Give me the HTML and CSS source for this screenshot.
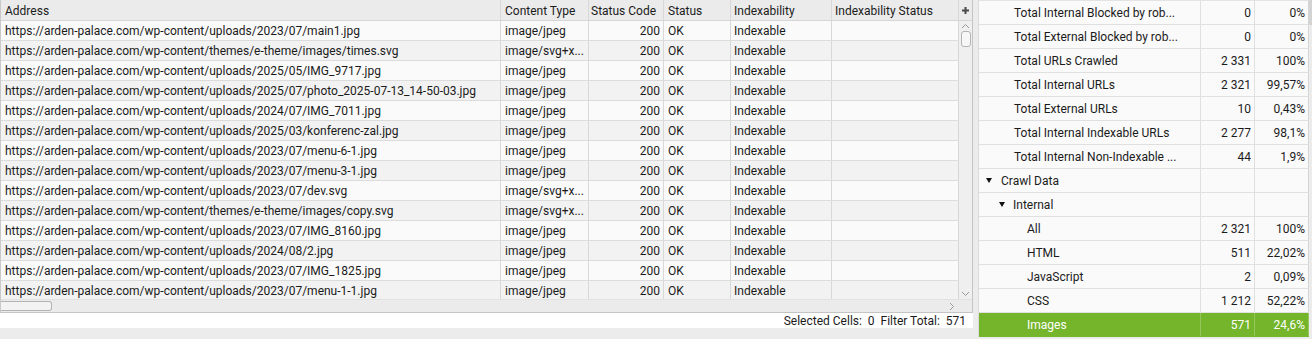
FILE: index.html
```html
<!DOCTYPE html>
<html lang="en">
<head>
<meta charset="utf-8">
<title>Crawl</title>
<link rel="stylesheet" href="styles.css">
</head>
<body>
<div class="app">
  <section class="left">
    <div class="grid">
      <div class="thead">
        <div class="th c-addr">Address</div>
        <div class="th c-ct">Content Type</div>
        <div class="th c-sc">Status Code</div>
        <div class="th c-st">Status</div>
        <div class="th c-ix">Indexability</div>
        <div class="th c-ixs">Indexability Status</div>
        <div class="th c-plus"><svg width="9" height="9" viewBox="0 0 9 9"><path d="M4.5 1v7M1 4.5h7" stroke="#4a4a4a" stroke-width="2"/></svg></div>
      </div>
      <div class="tbody">
        <div class="rows">
          <div class="tr"><div class="td c-addr">https://arden-palace.com/wp-content/uploads/2023/07/main1.jpg</div><div class="td c-ct">image/jpeg</div><div class="td c-sc">200</div><div class="td c-st">OK</div><div class="td c-ix">Indexable</div><div class="td c-ixs"></div></div>
          <div class="tr"><div class="td c-addr">https://arden-palace.com/wp-content/themes/e-theme/images/times.svg</div><div class="td c-ct">image/svg+x...</div><div class="td c-sc">200</div><div class="td c-st">OK</div><div class="td c-ix">Indexable</div><div class="td c-ixs"></div></div>
          <div class="tr"><div class="td c-addr">https://arden-palace.com/wp-content/uploads/2025/05/IMG_9717.jpg</div><div class="td c-ct">image/jpeg</div><div class="td c-sc">200</div><div class="td c-st">OK</div><div class="td c-ix">Indexable</div><div class="td c-ixs"></div></div>
          <div class="tr"><div class="td c-addr">https://arden-palace.com/wp-content/uploads/2025/07/photo_2025-07-13_14-50-03.jpg</div><div class="td c-ct">image/jpeg</div><div class="td c-sc">200</div><div class="td c-st">OK</div><div class="td c-ix">Indexable</div><div class="td c-ixs"></div></div>
          <div class="tr"><div class="td c-addr">https://arden-palace.com/wp-content/uploads/2024/07/IMG_7011.jpg</div><div class="td c-ct">image/jpeg</div><div class="td c-sc">200</div><div class="td c-st">OK</div><div class="td c-ix">Indexable</div><div class="td c-ixs"></div></div>
          <div class="tr"><div class="td c-addr">https://arden-palace.com/wp-content/uploads/2025/03/konferenc-zal.jpg</div><div class="td c-ct">image/jpeg</div><div class="td c-sc">200</div><div class="td c-st">OK</div><div class="td c-ix">Indexable</div><div class="td c-ixs"></div></div>
          <div class="tr"><div class="td c-addr">https://arden-palace.com/wp-content/uploads/2023/07/menu-6-1.jpg</div><div class="td c-ct">image/jpeg</div><div class="td c-sc">200</div><div class="td c-st">OK</div><div class="td c-ix">Indexable</div><div class="td c-ixs"></div></div>
          <div class="tr"><div class="td c-addr">https://arden-palace.com/wp-content/uploads/2023/07/menu-3-1.jpg</div><div class="td c-ct">image/jpeg</div><div class="td c-sc">200</div><div class="td c-st">OK</div><div class="td c-ix">Indexable</div><div class="td c-ixs"></div></div>
          <div class="tr"><div class="td c-addr">https://arden-palace.com/wp-content/uploads/2023/07/dev.svg</div><div class="td c-ct">image/svg+x...</div><div class="td c-sc">200</div><div class="td c-st">OK</div><div class="td c-ix">Indexable</div><div class="td c-ixs"></div></div>
          <div class="tr"><div class="td c-addr">https://arden-palace.com/wp-content/themes/e-theme/images/copy.svg</div><div class="td c-ct">image/svg+x...</div><div class="td c-sc">200</div><div class="td c-st">OK</div><div class="td c-ix">Indexable</div><div class="td c-ixs"></div></div>
          <div class="tr"><div class="td c-addr">https://arden-palace.com/wp-content/uploads/2023/07/IMG_8160.jpg</div><div class="td c-ct">image/jpeg</div><div class="td c-sc">200</div><div class="td c-st">OK</div><div class="td c-ix">Indexable</div><div class="td c-ixs"></div></div>
          <div class="tr"><div class="td c-addr">https://arden-palace.com/wp-content/uploads/2024/08/2.jpg</div><div class="td c-ct">image/jpeg</div><div class="td c-sc">200</div><div class="td c-st">OK</div><div class="td c-ix">Indexable</div><div class="td c-ixs"></div></div>
          <div class="tr"><div class="td c-addr">https://arden-palace.com/wp-content/uploads/2023/07/IMG_1825.jpg</div><div class="td c-ct">image/jpeg</div><div class="td c-sc">200</div><div class="td c-st">OK</div><div class="td c-ix">Indexable</div><div class="td c-ixs"></div></div>
          <div class="tr"><div class="td c-addr">https://arden-palace.com/wp-content/uploads/2023/07/menu-1-1.jpg</div><div class="td c-ct">image/jpeg</div><div class="td c-sc">200</div><div class="td c-st">OK</div><div class="td c-ix">Indexable</div><div class="td c-ixs"></div></div>
        </div>
        <div class="vscroll">
          <svg class="chev" width="9" height="6" viewBox="0 0 9 6"><path d="M1 5l3.5-3.5L8 5" fill="none" stroke="#9a9a9a" stroke-width="1"/></svg>
          <div class="vthumb"></div>
          <div class="vspacer"></div>
          <svg class="chev" width="9" height="6" viewBox="0 0 9 6"><path d="M1 1l3.5 3.5L8 1" fill="none" stroke="#9a9a9a" stroke-width="1"/></svg>
        </div>
      </div>
      <div class="hscroll">
        <div class="hthumb"></div>
        <svg class="hchev" width="6" height="9" viewBox="0 0 6 9"><path d="M1 1l3.5 3.5L1 8" fill="none" stroke="#9a9a9a" stroke-width="1"/></svg>
        <div class="hcorner"></div>
      </div>
    </div>
    <div class="status">Selected Cells:&nbsp; 0&nbsp; Filter Total:&nbsp; 571</div>
  </section>

  <section class="right">
    <div class="tree">
      <div class="trow"><div class="lbl l1">Total Internal Blocked by rob...</div><div class="num">0</div><div class="pct">0%</div></div>
      <div class="trow"><div class="lbl l1">Total External Blocked by rob...</div><div class="num">0</div><div class="pct">0%</div></div>
      <div class="trow"><div class="lbl l1">Total URLs Crawled</div><div class="num">2 331</div><div class="pct">100%</div></div>
      <div class="trow"><div class="lbl l1">Total Internal URLs</div><div class="num">2 321</div><div class="pct">99,57%</div></div>
      <div class="trow"><div class="lbl l1">Total External URLs</div><div class="num">10</div><div class="pct">0,43%</div></div>
      <div class="trow"><div class="lbl l1">Total Internal Indexable URLs</div><div class="num">2 277</div><div class="pct">98,1%</div></div>
      <div class="trow"><div class="lbl l1">Total Internal Non-Indexable ...</div><div class="num">44</div><div class="pct">1,9%</div></div>
      <div class="trow"><div class="lbl g0"><span class="tri"></span>Crawl Data</div><div class="num"></div><div class="pct"></div></div>
      <div class="trow"><div class="lbl g1"><span class="tri"></span>Internal</div><div class="num"></div><div class="pct"></div></div>
      <div class="trow"><div class="lbl l2">All</div><div class="num">2 321</div><div class="pct">100%</div></div>
      <div class="trow"><div class="lbl l2">HTML</div><div class="num">511</div><div class="pct">22,02%</div></div>
      <div class="trow"><div class="lbl l2">JavaScript</div><div class="num">2</div><div class="pct">0,09%</div></div>
      <div class="trow"><div class="lbl l2">CSS</div><div class="num">1 212</div><div class="pct">52,22%</div></div>
      <div class="trow sel"><div class="lbl l2">Images</div><div class="num">571</div><div class="pct">24,6%</div></div>
    </div>
    <div class="rscroll"><div class="rthumb"></div></div>
  </section>
</div>
</body>
</html>
```

FILE: styles.css
```css
* { box-sizing: border-box; }
html, body { margin: 0; padding: 0; }
body {
  background: #ececec;
  font-family: Roboto, "Liberation Sans", Arial, sans-serif;
  font-size: 12px;
  color: #1b1b1b;
  width: 1312px;
  height: 339px;
  overflow: hidden;
}
.app {
  display: flex;
  align-items: flex-start;
  gap: 5px;
  height: 339px;
}

/* ---------- left grid ---------- */
.left {
  width: 973px;
  flex: none;
  display: flex;
  flex-direction: column;
}
.grid {
  height: 313px;
  border-left: 1px solid #c9c9c9;
  border-right: 1px solid #c4c4c4;
  border-bottom: 1px solid #c4c4c4;
  display: flex;
  flex-direction: column;
  background: #f9f9f9;
}
.thead {
  height: 21px;
  display: flex;
  background: #ebebeb;
  border-bottom: 1px solid #d6d6d6;
}
.th, .td {
  border-right: 1px solid #d8d8d8;
  padding: 1px 4px 0;
  white-space: nowrap;
  overflow: hidden;
  display: flex;
  align-items: center;
  flex: none;
}
.c-addr { width: 500px; }
.c-ct { width: 88px; }
.c-sc { width: 75px; justify-content: flex-end; padding-right: 3px; }
.th.c-sc { justify-content: flex-start; padding-left: 2px; }
.c-st { width: 67px; }
.c-ix { width: 101px; padding-left: 3px; }
.c-ixs { width: 127px; padding-left: 3px; }
.c-plus { width: 13px; border-right: none; justify-content: center; padding: 0; }

.tbody {
  height: 278px;
  display: flex;
  overflow: hidden;
}
.rows {
  width: 958px;
  flex: none;
  overflow: hidden;
}
.tr {
  height: 20px;
  display: flex;
  border-bottom: 1px solid #dcdcdc;
  background: #fafafa;
}
.tr:nth-child(even) { background: #f2f2f2; }

.vscroll {
  width: 13px;
  flex: none;
  background: #efefef;
  display: flex;
  flex-direction: column;
  align-items: center;
  padding-top: 2px;
  padding-bottom: 2px;
}
.chev { display: block; flex: none; }
.vthumb {
  width: 10px;
  height: 16px;
  margin-top: 2px;
  margin-left: 1px;
  border: 1px solid #b3b3b3;
  border-radius: 3px;
  background: #f6f6f6;
  flex: none;
}
.vspacer { flex: 1; }

.hscroll {
  height: 13px;
  display: flex;
  align-items: center;
  background: #ebebeb;
  border-top: 1px solid #e2e2e2;
}
.hthumb {
  width: 51px;
  height: 10px;
  border: 1px solid #b3b3b3;
  border-left: none;
  border-radius: 0 3px 3px 0;
  background: #f3f3f3;
  flex: none;
}
.hchev { margin-left: auto; margin-right: 4px; display: block; }
.hcorner { width: 13px; flex: none; }

.status {
  height: 15px;
  background: #fff;
  text-align: right;
  padding: 1px 7px 0 0;
  line-height: 15px;
  white-space: nowrap;
}

/* ---------- right tree ---------- */
.right {
  flex: 1;
  display: flex;
  height: 337px;
}
.tree {
  width: 331px;
  flex: none;
  border-left: 1px solid #dcdcdc;
  border-top: 1px solid #e3e3e3;
  background: #fafafa;
}
.trow {
  height: 24px;
  display: flex;
  border-bottom: 1px solid #e0e0e0;
}
.lbl, .num, .pct {
  display: flex;
  align-items: center;
  white-space: nowrap;
  overflow: hidden;
  border-right: 1px solid #e0e0e0;
  flex: none;
  padding-top: 1px;
}
.lbl { width: 222px; }
.num { width: 54px; justify-content: flex-end; padding-right: 3px; }
.pct { width: 54px; justify-content: flex-end; padding-right: 3px; border-right: 1px solid #d4d4d4; }
.l1 { padding-left: 35px; }
.l2 { padding-left: 48px; }
.g0 { padding-left: 7px; }
.g1 { padding-left: 20px; }
.tri {
  width: 0;
  height: 0;
  border-left: 3.5px solid transparent;
  border-right: 3.5px solid transparent;
  border-top: 5px solid #111;
  margin-right: 9px;
  margin-top: -1px;
  flex: none;
}
.g1 .tri { margin-right: 8px; }
.trow.sel {
  background: #74b52c;
  color: #fff;
  border-bottom-color: #74b52c;
}
.trow.sel .lbl, .trow.sel .num, .trow.sel .pct { border-right-color: #93c65c; }

.rscroll {
  width: 3px;
  flex: none;
  background: #ececec;
  height: 337px;
}
.rthumb {
  height: 25px;
  background: #d3d3d3;
}
```
